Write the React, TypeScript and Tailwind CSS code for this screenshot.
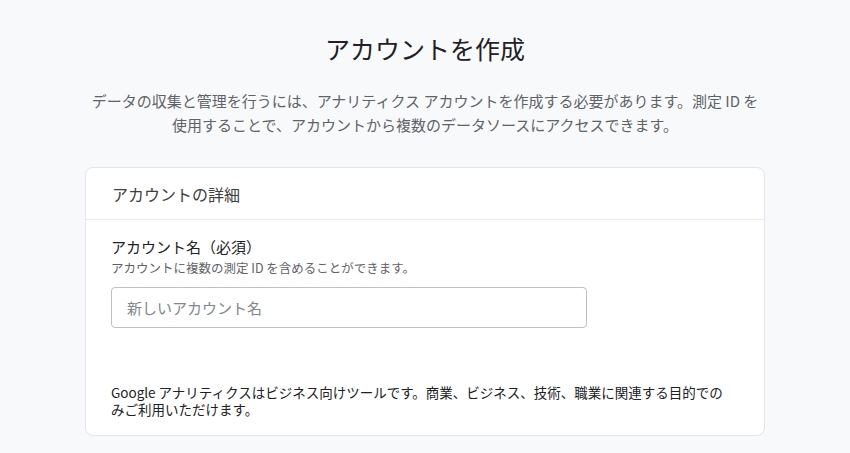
import React from "react";

export default function App() {
  return (
    <div
      className="min-h-[453px] w-full bg-[#f8f9fb] flex flex-col items-center"
      style={{ fontFamily: '"Noto Sans CJK JP", "Noto Sans", sans-serif' }}
    >
      <h1 className="mt-[32px] text-[25px] leading-[32px] text-[#202124] font-normal">
        アカウントを作成
      </h1>
      <p className="mt-[25px] text-[15px] leading-[24px] text-[#5f6368] text-center">
        データの収集と管理を行うには、アナリティクス アカウントを作成する必要があります。測定 ID を
        <br />
        使用することで、アカウントから複数のデータソースにアクセスできます。
      </p>
      <div className="mt-[30px] w-[680px] bg-white rounded-[8px] border border-[#e3e5ea]">
        <div className="h-[52px] flex items-center px-[26px] border-b border-[#e8eaed]">
          <span className="text-[16px] leading-[22px] text-[#3c4043]">アカウントの詳細</span>
        </div>
        <div className="px-[25px] pt-[17px] pb-[17px] flex flex-col">
          <div className="text-[15px] leading-[20px] text-[#202124]">アカウント名（必須）</div>
          <div className="mt-[3px] text-[12.5px] leading-[16px] text-[#5f6368]">
            アカウントに複数の測定 ID を含めることができます。
          </div>
          <div className="mt-[11px] w-[476px] h-[41px] rounded-[4px] border border-[#bdc1c6] flex items-center px-[15px]">
            <span className="text-[15px] leading-[20px] text-[#80868b]">新しいアカウント名</span>
          </div>
          <p className="mt-[56px] text-[13.5px] leading-[17px] text-[#202124]">
            Google アナリティクスはビジネス向けツールです。商業、ビジネス、技術、職業に関連する目的での
            <br />
            みご利用いただけます。
          </p>
        </div>
      </div>
    </div>
  );
}
